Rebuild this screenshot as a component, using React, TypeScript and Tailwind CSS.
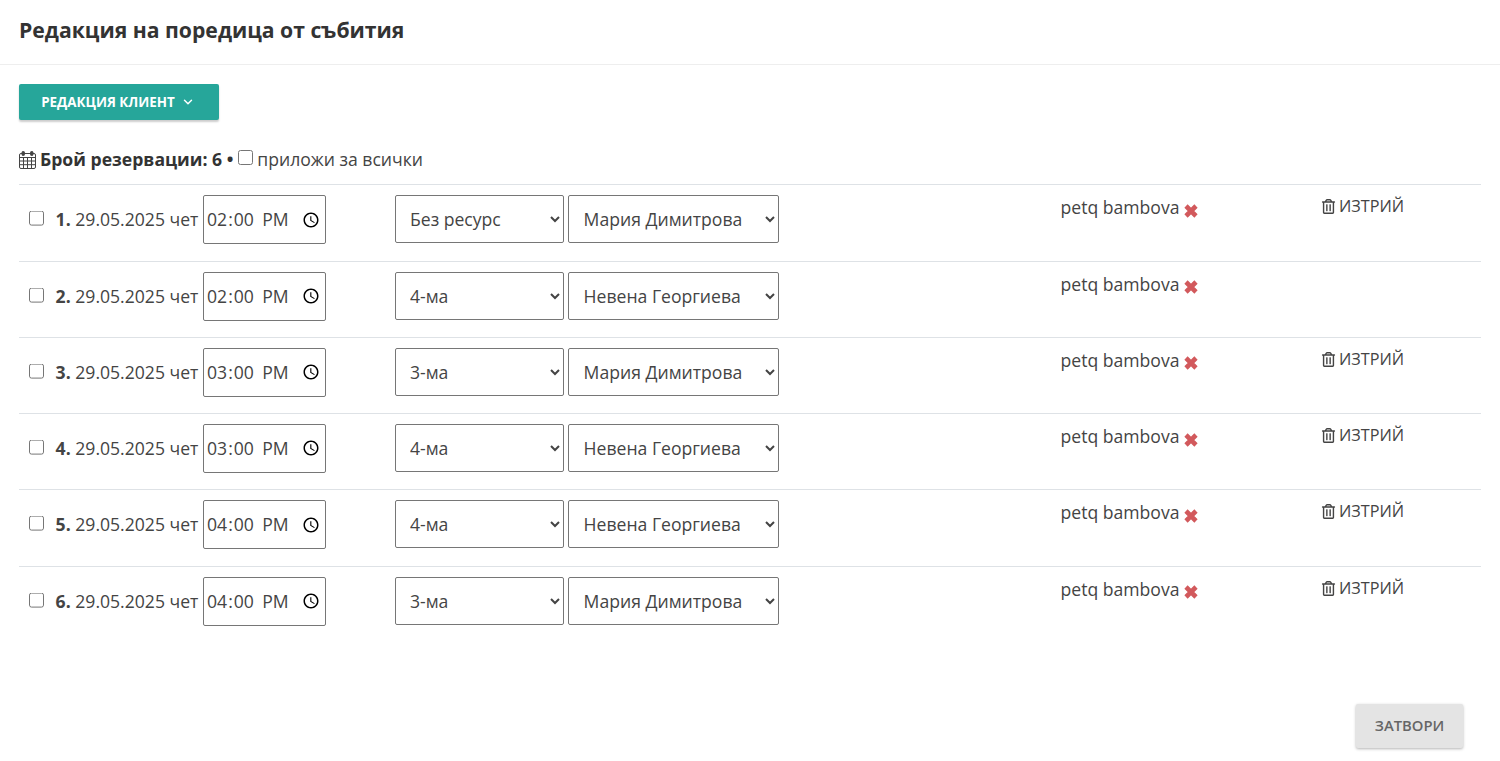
import React from 'react';
import { ChevronDown } from 'lucide-react';
import { FaRegTrashAlt } from 'react-icons/fa';

interface Booking {
  n: number;
  time: string;
  resource: string;
  staff: string;
  canDelete: boolean;
}

const bookings: Booking[] = [
  { n: 1, time: '14:00', resource: 'Без ресурс', staff: 'Мария Димитрова', canDelete: true },
  { n: 2, time: '14:00', resource: '4-ма', staff: 'Невена Георгиева', canDelete: false },
  { n: 3, time: '15:00', resource: '3-ма', staff: 'Мария Димитрова', canDelete: true },
  { n: 4, time: '15:00', resource: '4-ма', staff: 'Невена Георгиева', canDelete: true },
  { n: 5, time: '16:00', resource: '4-ма', staff: 'Невена Георгиева', canDelete: true },
  { n: 6, time: '16:00', resource: '3-ма', staff: 'Мария Димитрова', canDelete: true },
];

const resources = ['Без ресурс', '3-ма', '4-ма'];
const staff = ['Мария Димитрова', 'Невена Георгиева'];

function CalendarIcon() {
  return (
    <svg width="17" height="18" viewBox="0 0 17 18" className="shrink-0" fill="none" stroke="#444" strokeWidth="1">
      <rect x="0.5" y="2.5" width="16" height="15" rx="1.5" />
      <path d="M0.5 6.5h16M0.5 10h16M0.5 13.7h16M4.5 6.5v11M8.5 6.5v11M12.5 6.5v11" />
      <rect x="3" y="0.5" width="2.5" height="4" rx="1" fill="#444" />
      <rect x="11.5" y="0.5" width="2.5" height="4" rx="1" fill="#444" />
    </svg>
  );
}

// chunky cross, same proportions as the old font-awesome "remove" glyph
function RemoveIcon() {
  return (
    <svg width="16" height="16" viewBox="0 0 16 16" className="ml-[3.5px] mt-[7.5px] shrink-0" stroke="#d2595c" strokeWidth="4.6">
      <path d="M3 3l10 10M13 3L3 13" />
    </svg>
  );
}

function BookingRow({ booking }: { booking: Booking }) {
  return (
    <div className="flex h-[76.25px] items-start border-t border-[#dee2e6] pt-[10px]">
      <div className="flex h-[49px] w-[184px] shrink-0 items-center pl-[10px]">
        <input type="checkbox" className="m-0 h-[15px] w-[15px] -translate-y-[1.4px]" />
        <span className="ml-[11.6px] whitespace-nowrap">
          <b className="font-bold">{booking.n}.</b> 29.05.2025 чет
        </span>
      </div>
      <input
        type="time"
        defaultValue={booking.time}
        className="h-[49px] w-[123px] shrink-0 rounded-[2px] border border-[#767676] px-[2px] text-[17.6px] text-[#444] [&::-webkit-datetime-edit-ampm-field]:ml-[4px]"
      />
      <select
        defaultValue={booking.resource}
        className="ml-[69px] h-[48px] w-[169px] shrink-0 rounded-[2px] border border-[#767676] bg-white px-[10px] text-[17.6px] text-[#444]"
      >
        {resources.map((r) => (
          <option key={r}>{r}</option>
        ))}
      </select>
      <select
        defaultValue={booking.staff}
        className="ml-[4px] h-[48px] w-[211px] shrink-0 rounded-[2px] border border-[#767676] bg-white pl-[10.6px] pr-[6px] text-[17.6px] text-[#444]"
      >
        {staff.map((s) => (
          <option key={s}>{s}</option>
        ))}
      </select>
      <div className="ml-[281.5px] flex w-[260.5px] shrink-0 items-start whitespace-nowrap">
        <span>petq bambova</span>
        <RemoveIcon />
      </div>
      {booking.canDelete && (
        <div className="-mt-[1px] flex items-center gap-[3px] whitespace-nowrap text-[16.2px]">
          <FaRegTrashAlt size={15} />
          ИЗТРИЙ
        </div>
      )}
    </div>
  );
}

export default function App() {
  return (
    <div className="h-[761px] overflow-hidden bg-white font-['Open_Sans',sans-serif] text-[17.6px] leading-[25px] text-[#444]">
      <div className="flex h-[65px] items-center border-b border-[#eeeeee] px-[19px] pb-[6px]">
        <h1 className="text-[21.2px] font-bold text-[#333]">Редакция на поредица от събития</h1>
      </div>

      <div className="px-[19px] pt-[19px]">
        <button className="flex h-[36px] w-[200px] items-center justify-center gap-[6px] rounded-[2px] bg-[#26a69a] pr-[2px] text-[13.4px] font-bold text-white shadow-[0_2px_2px_rgba(0,0,0,0.2)]">
          РЕДАКЦИЯ КЛИЕНТ
          <ChevronDown size={14} strokeWidth={2.5} />
        </button>

        <div className="mt-[28px] flex h-[25px] -translate-y-[1px] items-center whitespace-nowrap">
          <CalendarIcon />
          <b className="ml-[4px] font-bold text-[#333]">Брой резервации: 6 •</b>
          <input type="checkbox" className="mx-[4.5px] mb-[4px] h-[15px] w-[15px]" />
          <span>приложи за всички</span>
        </div>

        <div className="mt-[11.4px]">
          {bookings.map((b) => (
            <BookingRow key={b.n} booking={b} />
          ))}
        </div>

        <div className="mt-[62px] flex justify-end pr-[18px]">
          <button className="h-[44px] w-[107px] rounded-[2px] bg-[#e4e4e4] text-[14.8px] font-semibold text-[#666] shadow-[0_1px_3px_rgba(0,0,0,0.3)]">
            ЗАТВОРИ
          </button>
        </div>
      </div>
    </div>
  );
}
